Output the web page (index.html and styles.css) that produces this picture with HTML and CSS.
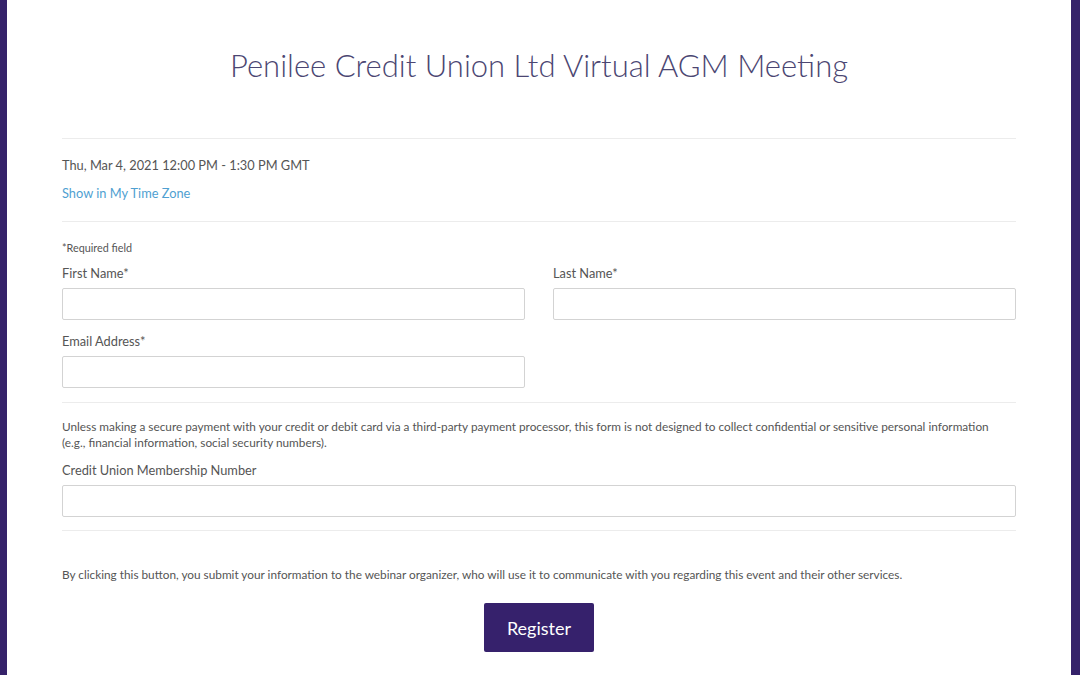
FILE: index.html
```html
<!DOCTYPE html>
<html>
<head>
<meta charset="utf-8">
<link rel="stylesheet" href="styles.css">
</head>
<body>
<div class="frame">
  <main class="page">
    <h1 class="title">Penilee Credit Union Ltd Virtual AGM Meeting</h1>
    <hr class="rule">
    <section class="when">
      <div class="date">Thu, Mar 4, 2021 12:00 PM - 1:30 PM GMT</div>
      <a class="tz" href="#">Show in My Time Zone</a>
    </section>
    <hr class="rule">
    <form class="form">
      <div class="req">*Required field</div>
      <div class="row">
        <label class="field">
          <span class="label">First Name*</span>
          <input class="input" type="text">
        </label>
        <label class="field">
          <span class="label">Last Name*</span>
          <input class="input" type="text">
        </label>
      </div>
      <div class="row">
        <label class="field">
          <span class="label">Email Address*</span>
          <input class="input" type="text">
        </label>
        <div class="field"></div>
      </div>
      <hr class="rule rule-form">
      <p class="note">Unless making a secure payment with your credit or debit card via a third-party payment processor, this form is not designed to collect confidential or sensitive personal information (e.g., financial information, social security numbers).</p>
      <label class="field full">
        <span class="label">Credit Union Membership Number</span>
        <input class="input" type="text">
      </label>
      <hr class="rule rule-bottom">
      <p class="consent">By clicking this button, you submit your information to the webinar organizer, who will use it to communicate with you regarding this event and their other services.</p>
      <div class="actions">
        <button class="btn" type="button">Register</button>
      </div>
    </form>
  </main>
</div>
</body>
</html>
```

FILE: styles.css
```css
* { box-sizing: border-box; }
html, body { margin: 0; padding: 0; }
body {
  background: #35226a;
  font-family: Lato, "Open Sans", sans-serif;
  color: #555;
  height: 675px;
  overflow: hidden;
}
.frame {
  margin: 0 9px 0 7px;
  background: #fff;
  height: 675px;
}
.page {
  width: 954px;
  margin: 0 auto;
  padding-top: 45px;
}
.title {
  margin: 0;
  font-weight: 300;
  font-size: 31px;
  line-height: 40px;
  color: #4b4672;
  text-align: center;
}
.rule {
  border: 0;
  border-top: 1px solid #ececec;
  margin: 0;
}
.page > .rule:first-of-type { margin-top: 53px; }
.when {
  padding: 17px 0 19px;
}
.date {
  font-size: 12.8px;
  line-height: 18px;
  color: #555;
}
.tz {
  display: block;
  margin-top: 10px;
  font-size: 12.8px;
  line-height: 18px;
  color: #4f9fd1;
  text-decoration: none;
}
.form { padding-top: 19px; }
.req {
  font-size: 10.8px;
  line-height: 14px;
  color: #555;
}
.row {
  display: grid;
  grid-template-columns: 1fr 1fr;
  column-gap: 28px;
  margin-top: 9px;
}
.row + .row { margin-top: 12px; }
.field {
  display: flex;
  flex-direction: column;
}
.label {
  font-size: 12.8px;
  line-height: 18px;
  color: #555;
  margin-bottom: 6px;
}
.input {
  height: 32px;
  border: 1px solid #d3d3d3;
  border-radius: 2px;
  background: #fff;
  font: inherit;
  margin: 0;
}
.rule-form { margin-top: 14px; }
.note {
  margin: 16px 0 0;
  padding-right: 20px;
  font-size: 11.8px;
  line-height: 16px;
  color: #555;
}
.full { margin-top: 10px; }
.rule-bottom { margin-top: 13px; }
.consent {
  margin: 36px 0 0;
  font-size: 11.8px;
  line-height: 16px;
  color: #555;
}
.actions {
  display: flex;
  justify-content: center;
  margin-top: 20px;
}
.btn {
  width: 110px;
  height: 49px;
  border: 0;
  border-radius: 2px;
  background: #36216c;
  color: #fff;
  font-family: Lato, sans-serif;
  font-size: 18px;
  cursor: pointer;
}
```
